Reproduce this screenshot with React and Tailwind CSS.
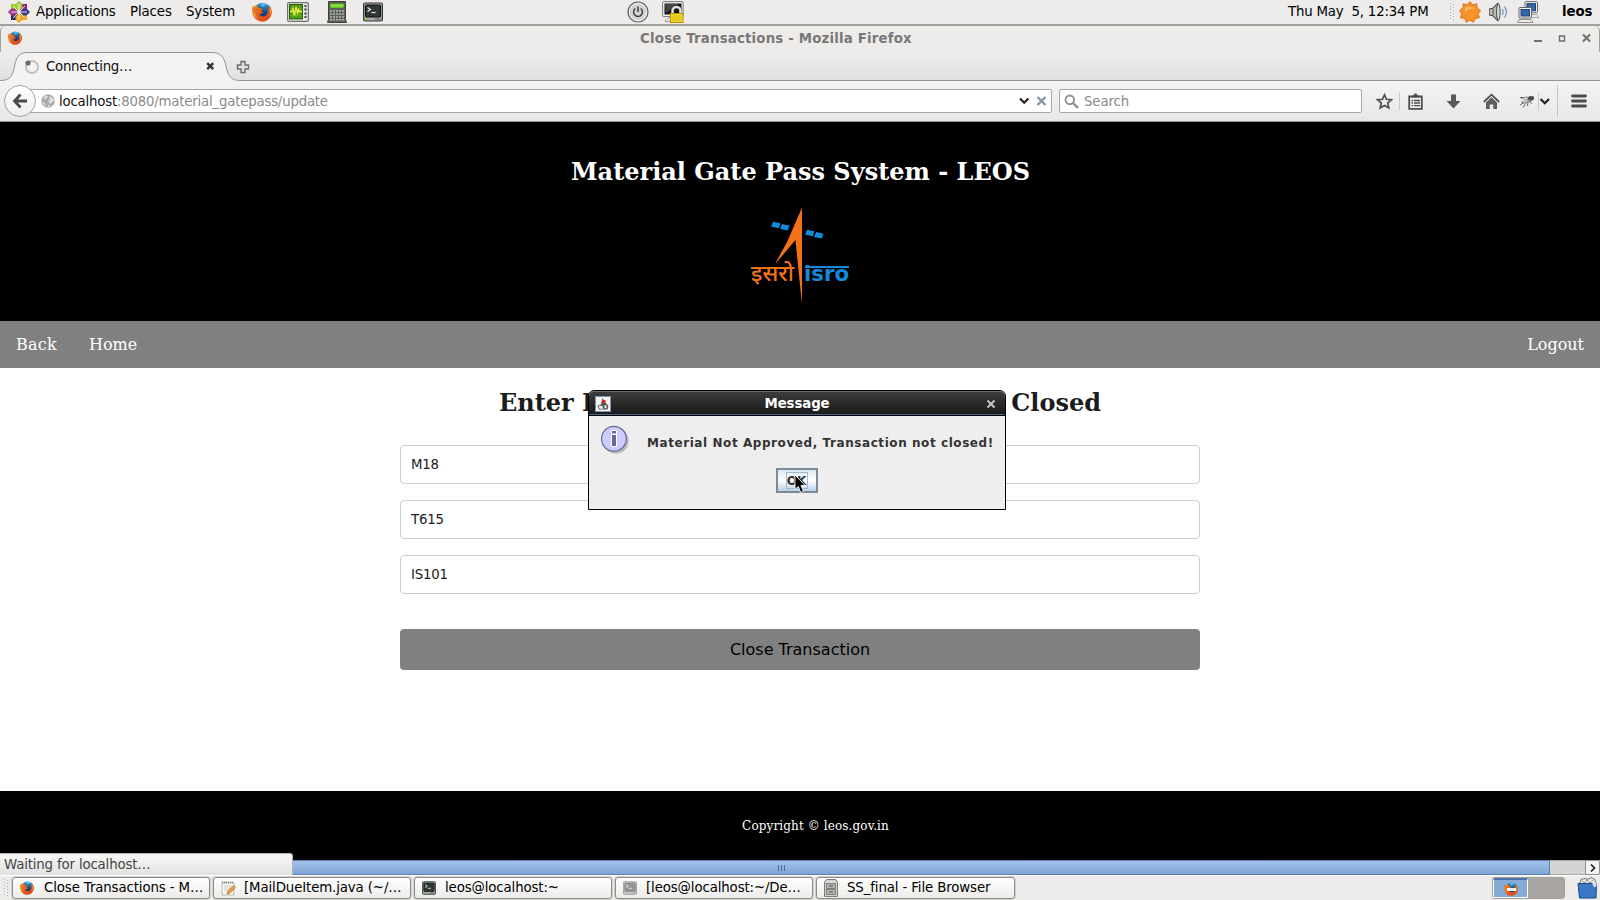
import React from "react";

function Firefox({ size = 20 }) {
  return (
    <svg width={size} height={size} viewBox="0 0 20 20" className="block shrink-0">
      <defs>
        <linearGradient id="fxb" x1="0" y1="0" x2="0" y2="1">
          <stop offset="0" stopColor="#2f9fd0" />
          <stop offset="0.6" stopColor="#16407c" />
          <stop offset="1" stopColor="#102a5c" />
        </linearGradient>
        <linearGradient id="fxo" x1="0" y1="0" x2="1" y2="1">
          <stop offset="0" stopColor="#f08a1c" />
          <stop offset="0.5" stopColor="#e5591a" />
          <stop offset="1" stopColor="#d7401c" />
        </linearGradient>
      </defs>
      <circle cx="10.5" cy="9.5" r="8.8" fill="url(#fxb)" />
      <path d="M9 2c2-1 4-.8 6 .5-1 1-3 .8-4 2.500-1-.5-2-1.500-2-3z" fill="#5cc0e6" />
      <path d="M1 3.200C.2 5.500 0 8 .4 11c.9 5 5 8.700 9.800 8.700 5.400 0 9.600-4.300 9.600-9.700 0-2.500-.8-4.800-2-6.200.5 2 .4 3.600-.1 5-.2-2-1-4-3-5.400 1.300 2.300 1.900 5.300.9 7.600-1 2.500-3.200 3.700-5.400 3.300-1.700-.3-2.700-1.400-3-2.500 1.400.5 2.700-.1 4-1 .2-.9-1-1.200-2-1.100-.3-1 .7-1.800 1.500-2.300-.4-1-1.900-1.200-3-1C6.300 5.600 5.500 4.700 5.400 3 3.800 3.500 2.800 4.200 2.300 5 1.700 4.600 1.200 4 1 3.200z" fill="url(#fxo)" />
      <path d="M17.800 4.500c1.500 3 1.500 7.500-.8 10.500 1-2.500 1.200-5 .7-6.800z" fill="#fbc83a" />
      <path d="M1.200 8c.3 1.500 1 2.500 1.600 3 .3 2.500 2 4.500 4 5.500C3.500 15.900 1 12.500 1.200 8z" fill="#f9a82e" />
    </svg>
  );
}

function Distro() {
  return (
    <svg width="22" height="22" viewBox="0 0 22 22" className="block">
      <path d="M11 0l3.500 3.600H7.500z" fill="#8fb440" />
      <path d="M22 11l-3.600 3.500V7.500z" fill="#262577" />
      <path d="M11 22l-3.500-3.600h7z" fill="#e9a22b" />
      <path d="M0 11l3.600-3.500v7z" fill="#932279" />
      <rect x="3" y="3" width="7" height="7" fill="#9ccd2a" />
      <rect x="12" y="3" width="7" height="7" fill="#932279" />
      <rect x="3" y="12" width="7" height="7" fill="#262577" />
      <rect x="12" y="12" width="7" height="7" fill="#efa724" />
      <path d="M7.500 3.600L11 1l3.500 2.600v3L11 10 7.500 6.600z" fill="#a6cf45" />
      <path d="M18.400 7.500L21 11l-2.600 3.500h-3L12 11l3.400-3.500z" fill="#3c3a8c" />
      <path d="M14.500 18.400L11 21l-3.500-2.600v-3L11 12l3.500 3.400z" fill="#efa724" />
      <path d="M3.600 14.500L1 11l2.600-3.500h3L10 11l-3.400 3.500z" fill="#a1368a" />
      <path d="M11 3v16M3 11h16M5 5l12 12M17 5L5 17" stroke="#f4f2ee" strokeWidth="0.9" />
    </svg>
  );
}

function Monitor() {
  return (
    <svg width="22" height="20" viewBox="0 0 22 20" className="block">
      <rect x="0.600" y="0.600" width="20.800" height="18.800" rx="1.500" fill="#ededeb" stroke="#6c6e6a" strokeWidth="1.200" />
      <rect x="2.500" y="2.500" width="13" height="14.500" fill="#4f9a12" stroke="#2b5b08" />
      <path d="M5.500 3v13M9 3v13M12.500 3v13M3 6.500h12M3 10h12M3 13.500h12" stroke="#6fb52d" strokeWidth="0.600" />
      <path d="M3 9.500h2l1-3 1.500 7L9 5l1.500 6 1-3.500 1 2H15" fill="none" stroke="#eef04a" strokeWidth="1.300" />
      <circle cx="18.500" cy="4" r="1.300" fill="#555" />
      <circle cx="18.500" cy="7.500" r="1.300" fill="#555" />
      <circle cx="18.500" cy="11.500" r="1.300" fill="#555" />
      <circle cx="18.500" cy="15" r="1.300" fill="#555" />
    </svg>
  );
}

function Calculator() {
  return (
    <svg width="20" height="22" viewBox="0 0 20 22" className="block">
      <path d="M1.500.5h17v18l1 3H.5l1-3z" fill="#5d605b" stroke="#3c3f3b" />
      <rect x="3" y="2.500" width="14" height="4.500" fill="#84dc3c" stroke="#3e7d14" strokeWidth="0.700" />
      <path d="M3 10h14M3 13h14M3 16h14M3 18.800h14" stroke="#b4b6b1" strokeWidth="1.500" strokeDasharray="2 1" />
    </svg>
  );
}

function Terminal({ size = 20, dim = false }) {
  return (
    <svg width={size} height={size} viewBox="0 0 20 20" className={dim ? "block opacity-50" : "block"}>
      <rect x="0.600" y="1" width="18.800" height="18" rx="1.500" fill="#a8aaa6" stroke="#353735" strokeWidth="1.200" />
      <rect x="2.500" y="3" width="15" height="12" rx="1" fill="#30393a" stroke="#111" />
      <path d="M4.500 5.500l3 2-3 2" fill="none" stroke="#e6eae6" strokeWidth="1.300" />
      <path d="M8.500 10.500h4" stroke="#e6eae6" strokeWidth="1.200" />
      <path d="M2 17h3" stroke="#73d216" strokeWidth="1.400" />
      <path d="M12 17h5.500" stroke="#5b5d5a" strokeWidth="1" />
    </svg>
  );
}

function Power() {
  return (
    <svg width="22" height="22" viewBox="0 0 22 22" className="block">
      <circle cx="11" cy="11" r="10" fill="#d2d2d0" stroke="#5f615e" strokeWidth="1.200" />
      <circle cx="11" cy="11" r="8.600" fill="none" stroke="#f6f6f5" strokeWidth="0.900" />
      <path d="M8.300 7.500a4.400 4.400 0 1 0 5.400 0" fill="none" stroke="#2e3436" strokeWidth="1.300" />
      <path d="M11 5.500v5.500" stroke="#2e3436" strokeWidth="1.400" />
    </svg>
  );
}

function LockScreen() {
  return (
    <svg width="22" height="22" viewBox="0 0 22 22" className="block">
      <rect x="0.600" y="0.600" width="20.500" height="15" rx="1" fill="#eee" stroke="#777" />
      <rect x="2.500" y="2.500" width="17" height="11" fill="#161616" />
      <path d="M3 3h13L4 12z" fill="#454545" />
      <path d="M3 20.500c0-2.500 3-1.500 4-4h4v4z" fill="#e8e8e6" stroke="#888" strokeWidth="0.700" />
      <path d="M10.500 13V10a4 4 0 0 1 8 0v3" fill="none" stroke="#777" strokeWidth="3.200" />
      <path d="M10.500 13V10a4 4 0 0 1 8 0v3" fill="none" stroke="#e4e4e2" strokeWidth="2" />
      <rect x="8.500" y="12.500" width="12.500" height="9" fill="#f2d82e" stroke="#b39300" />
      <path d="M10 15h9.500M10 17h9.500M10 19h9.500" stroke="#d4b60e" strokeWidth="0.800" />
    </svg>
  );
}

function Sun() {
  return (
    <svg width="22" height="22" viewBox="0 0 22 22" className="block">
      <path d="M11 .6l2.600 3.200 4.200-1 .2 4.100 3.500 2.500-2.200 3.300 1 4.100-4 .7-1.900 3.700-3.400-2L7.200 21.200l-1.500-3.900-4.200-.5 1.200-4L.6 9.400 4 6.900l.2-4.100 4.100 1z" fill="#f7922a" stroke="#dc6a0c" strokeWidth="0.900" />
      <path d="M6 7c3-2.500 8-2 10 1-4-1-7 0-10 3z" fill="#fbb669" />
    </svg>
  );
}

function Speaker() {
  return (
    <svg width="20" height="20" viewBox="0 0 20 20" className="block">
      <path d="M1 6.500h2.500L8.500 1.500v17L3.500 13.500H1C0 12 0 8.500 1 6.500z" fill="#b9bbb7" stroke="#4f524e" strokeWidth="1.100" />
      <path d="M4 7v6" stroke="#4f524e" />
      <ellipse cx="9.300" cy="10" rx="1.800" ry="8.500" fill="#d5dad5" stroke="#4f524e" />
      <path d="M13.200 7c1.200 1.500 1.200 4.500 0 6M15.500 4.500c2.500 3 2.500 8 0 11" fill="none" stroke="#6c92c8" strokeWidth="1.200" />
    </svg>
  );
}

function Network() {
  return (
    <svg width="22" height="22" viewBox="0 0 22 22" className="block">
      <path d="M9 13.500h11l1.500 3H9z" fill="#eee" stroke="#888" strokeWidth="0.700" />
      <rect x="8" y="0.700" width="12.500" height="11" rx="1" fill="#f2f2f0" stroke="#666" />
      <rect x="10" y="2.700" width="8.500" height="7" fill="#3465a4" stroke="#1c4480" />
      <rect x="2" y="6.500" width="12.500" height="10.500" rx="1" fill="#f2f2f0" stroke="#666" />
      <rect x="4" y="8.500" width="8.500" height="6.500" fill="#3465a4" stroke="#1c4480" />
      <path d="M2 18.500h12l2 3H.7z" fill="#eee" stroke="#777" strokeWidth="0.800" />
    </svg>
  );
}

function Grip() {
  return (
    <svg width="6" height="18" viewBox="0 0 6 18" className="block">
      <path d="M1.500 0v18M4.500 1v18" stroke="#b0aeab" strokeWidth="1" strokeDasharray="1 2" />
    </svg>
  );
}

function TopPanel() {
  return (
    <div className="flex h-[26px] shrink-0 items-center border-b-2 border-[#a3a19d] bg-[#edecea] text-[13.33px] whitespace-nowrap text-black">
      <div className="ml-2"><Distro /></div>
      <div className="ml-[6px] w-[94px] tracking-[-0.15px]">Applications</div>
      <div className="w-[56px] tracking-[-0.1px]">Places</div>
      <div className="w-[66px] tracking-[-0.1px]">System</div>
      <Firefox size={20} />
      <div className="ml-[15px]"><Monitor /></div>
      <div className="ml-[18px]"><Calculator /></div>
      <div className="ml-[16px]"><Terminal size={20} /></div>
      <div className="ml-[244px]"><Power /></div>
      <div className="ml-[13px]"><LockScreen /></div>
      <div className="ml-auto w-[161px] tracking-[-0.2px] whitespace-pre">Thu May  5, 12:34 PM</div>
      <Grip />
      <div className="ml-[4px]"><Sun /></div>
      <div className="ml-[8px]"><Speaker /></div>
      <div className="ml-[8px]"><Network /></div>
      <div className="ml-[23px] w-[38px] font-bold tracking-[-0.1px]">leos</div>
    </div>
  );
}

function TitleBar() {
  return (
    <div className="flex h-[26px] shrink-0 items-center rounded-t-[5px] border-x border-[#a3a19d] text-[13.33px]">
      <div className="-mt-[2px] ml-[7px]"><Firefox size={14} /></div>
      <div className="flex-1 pr-[3px] text-center font-bold tracking-[0.18px] text-[#797876]">Close Transactions - Mozilla Firefox</div>
      <svg width="58" height="12" viewBox="0 0 58 12" className="mr-[8px] block" fill="none" stroke="#6f6e6b">
        <path d="M1 8h8" strokeWidth="2" />
        <path d="M26.500 3v5h5V3M25.800 3h6.400" strokeWidth="1.400" />
        <path d="M50 1.500l7 7M57 1.500l-7 7" strokeWidth="2" />
      </svg>
    </div>
  );
}

function TabStrip() {
  return (
    <div className="flex h-[29px] shrink-0 bg-linear-to-b from-[#edecea] to-[#e2e1df]">
      <div className="grid h-[29px] w-[240px] shrink-0">
        <svg width="240" height="29" viewBox="0 0 240 29" className="col-start-1 row-start-1 block">
          <path d="M0 28.500C9 28.500 12 25 14 17C16 6 18 .5 27 .5H212C221 .5 224 5 226 14C228 24 231 28.500 240 28.500V29H0z" fill="#f4f3f2" />
          <path d="M0 28.500C9 28.500 12 25 14 17C16 6 18 .5 27 .5H212C221 .5 224 5 226 14C228 24 231 28.500 240 28.500" fill="none" stroke="#979592" />
        </svg>
        <div className="z-10 col-start-1 row-start-1 flex items-center pl-[24px] text-[13.33px] text-[#111]">
          <svg width="16" height="16" viewBox="0 0 16 16" className="block">
            <circle cx="8" cy="8" r="6" fill="none" stroke="#c2c1bf" strokeWidth="2" />
            <circle cx="4" cy="4" r="2.600" fill="#6b6a69" />
          </svg>
          <div className="ml-[6px] w-[160px] tracking-[-0.27px]">Connecting…</div>
          <svg width="9" height="9" viewBox="0 0 9 9" className="block">
            <path d="M1.200 1.200l6 6M7.200 1.200l-6 6" stroke="#333" strokeWidth="2.400" />
          </svg>
        </div>
      </div>
      <div className="flex flex-1 items-center border-b border-[#979592]">
        <svg width="14" height="14" viewBox="0 0 14 14" className="mt-[1px] -ml-[4px] block">
          <path d="M5 1.500h4V5h3.500v4H9v3.500H5V9H1.500V5H5z" fill="#e2e1df" stroke="#6e6d6b" strokeWidth="1.400" />
        </svg>
      </div>
    </div>
  );
}

function Toolbar() {
  return (
    <div className="flex h-[41px] shrink-0 items-center border-b border-[#9c9a97] bg-linear-to-b from-[#f4f3f2] to-[#e9e8e6] text-[13.33px]">
      <div className="z-10 ml-[4px] flex h-8 w-8 items-center justify-center rounded-full border border-[#9aa5b1] bg-linear-to-b from-white to-[#efeeed]">
        <svg width="16" height="16" viewBox="0 0 16 16" className="block" fill="none" stroke="#4b4b4b" strokeWidth="2.800">
          <path d="M8.500 1.500L2.500 8l6 6.500M3 8h12" />
        </svg>
      </div>
      <div className="-ml-[8px] flex h-6 w-[1024px] shrink-0 items-center rounded-r-[2px] border border-[#a9a7a4] bg-white pl-[12px]">
        <svg width="14" height="14" viewBox="0 0 14 14" className="block">
          <circle cx="7" cy="7" r="6.700" fill="#a9a9a9" />
          <path d="M2 3.500l3-2 2 .5-1 2-2 1.500zM1 8l3 1 1 3-2-1zM8 2l4 2 1 3-2 1-1 2-2-1-.5-3 1.500-1zM7 11l2 0 0 2-1.500.3z" fill="#dedede" />
        </svg>
        <div className="mt-[1px] ml-[4px] tracking-[-0.21px] text-[#8a8a8a]"><span className="text-[#111]">localhost</span>:8080/material_gatepass/update</div>
        <svg width="30" height="12" viewBox="0 0 30 12" className="mr-[3px] ml-auto block" fill="none">
          <path d="M2 3.500l4.200 4.200 4.200-4.200" stroke="#222" strokeWidth="2.200" />
          <path d="M19.500 2l8 8M27.500 2l-8 8" stroke="#8194a8" strokeWidth="2.400" />
        </svg>
      </div>
      <div className="ml-[7px] flex h-6 w-[303px] shrink-0 items-center rounded-[2px] border border-[#a9a7a4] bg-white">
        <svg width="15" height="15" viewBox="0 0 15 15" className="ml-[4px] block" fill="none" stroke="#8f8f8f">
          <circle cx="5.800" cy="5.800" r="4.300" strokeWidth="1.800" />
          <path d="M9 9l5 5" strokeWidth="2.400" />
        </svg>
        <div className="mt-[1px] ml-[5px] tracking-[-0.1px] text-[#8a8a8a]">Search</div>
      </div>
      <svg width="17" height="17" viewBox="0 0 17 17" className="ml-[14px] block">
        <path d="M8.500 1.800l2 4.500 4.900.5-3.700 3.300 1.100 4.800-4.300-2.500-4.300 2.500 1.100-4.800L1.600 6.800l4.900-.5z" fill="none" stroke="#4d4d4d" strokeWidth="1.700" />
      </svg>
      <div className="ml-[6px] h-[18px] w-px bg-[#c9c8c6]" />
      <svg width="15" height="17" viewBox="0 0 15 17" className="ml-[8px] block">
        <path d="M1.200 3.500h12.600v12.300H1.200z" fill="#f2f1f0" stroke="#4d4d4d" strokeWidth="1.800" />
        <path d="M4 4.500V2.500h1.500L6.500.5h2l1 2H11v2z" fill="#4d4d4d" />
        <path d="M3.500 7.500H5M6 7.500h6M3.500 10H5M6 10h6M3.500 12.700H5M6 12.700h6" stroke="#4d4d4d" strokeWidth="1.300" />
      </svg>
      <svg width="15" height="17" viewBox="0 0 15 17" className="ml-[23px] block">
        <path d="M5 1.500h5v6.500h4.500l-7 7.500-7-7.500H5z" fill="#5a5a5a" />
      </svg>
      <svg width="17" height="17" viewBox="0 0 17 17" className="ml-[22px] block">
        <path d="M.8 9l7.700-7.300L16.200 9" fill="none" stroke="#4d4d4d" strokeWidth="1.800" />
        <path d="M3 9.500l5.500-5.200 5.500 5.200V16h-3.700v-4.500H6.700V16H3z" fill="#5d5d5d" />
      </svg>
      <svg width="16" height="15" viewBox="0 0 16 15" className="ml-[19px] block">
        <path d="M1 4.500l7-2.200 2 2 4.500-2.500.5 3-3 3-4 1.500-5 .5-1-2.500 4-1z" fill="#9e9e9c" />
        <ellipse cx="12" cy="4.200" rx="3" ry="2.200" fill="#4c4c4a" />
        <path d="M10 7.500c2 .5 2 1.500 3 2.500M6.500 9.500L4 13.500M9 8.500l-.5 3.500M1 11l4-2.500M1 3.500h4" stroke="#555" strokeWidth="0.900" fill="none" />
        <path d="M3 5.500l5-1M4 8l4-1.500" stroke="#f0f0f0" strokeWidth="0.900" />
      </svg>
      <div className="ml-[3px] h-[18px] w-px bg-[#c9c8c6]" />
      <svg width="12" height="9" viewBox="0 0 12 9" className="block" fill="none">
        <path d="M1.500 2l4.300 4.300L10 2" stroke="#222" strokeWidth="2.200" />
      </svg>
      <div className="ml-[6px] h-[32px] w-px bg-[#c2c5ca]" />
      <svg width="16" height="16" viewBox="0 0 16 16" className="ml-[13px] block">
        <path d="M1.500 3h13M1.500 8h13M1.500 13h13" stroke="#4d4d4d" strokeWidth="2.800" strokeLinecap="round" />
      </svg>
    </div>
  );
}

function IsroLogo() {
  return (
    <svg width="104" height="100" viewBox="748 206 104 100" className="block overflow-visible">
      <path d="M802 207.500V304L800.500 290L795.500 240L775.200 264C779 256 784 248 788 240z" fill="#f47216" />
      <g fill="#118bd9">
        <path d="M773 221.800l7.500 1.500-1.800 5-7.500-1.500zM782 224l7.600 1.700-1.900 4.900-7.500-1.500zM807 229.800l7.500 1.500-1.800 5-7.500-1.500zM816 232l7.500 1.700-1.900 4.900-7.500-1.500z" />
        <rect x="805" y="266" width="44" height="2" />
      </g>
      <text x="751" y="280.500" textLength="43" lengthAdjust="spacingAndGlyphs" fontFamily="'Noto Sans', sans-serif" fontSize="22.500" fontWeight="500" fill="#f47216">इसरो</text>
      <text x="804" y="281" textLength="45" lengthAdjust="spacingAndGlyphs" fontFamily="'DejaVu Sans', sans-serif" fontSize="21" fontWeight="700" fill="#118bd9">isro</text>
    </svg>
  );
}

function Field({ value }) {
  return (
    <div className="flex h-[39px] items-center rounded-[4px] border border-[#cccccc] bg-white pl-[10px] text-[13.33px] tracking-[-0.2px] text-[#1c1c1c]">{value}</div>
  );
}

function Dialog() {
  return (
    <div className="absolute top-[390px] left-[588px] z-20 flex h-[120px] w-[418px] flex-col rounded-t-[6px] border border-black bg-[#eeeeee] [font-family:'DejaVu_Sans',sans-serif]">
      <div className="flex h-[25px] shrink-0 items-center rounded-t-[5px] border-b border-black bg-linear-to-b from-[#3c3c3c] via-[#2b2b2b] to-[#1a1a1a] shadow-[inset_0_1px_0_#6a6a6a,inset_0_-1px_0_#456593]">
        <svg width="16" height="16" viewBox="0 0 16 16" className="mt-[1px] ml-[6px] block">
          <rect x="0.500" y="0.500" width="15" height="15" fill="#f2f4f5" stroke="#7d98ae" />
          <path d="M7.500 2l2 3.500 4 4.500-1 3.500H4L2.500 9.500l3.500-1z" fill="#555" />
          <path d="M3.500 9.500l4 .5.500 3-3.500-.5zM9.500 9l2 .500v2.500l-2 .5z" fill="#f0f0ee" />
          <circle cx="9" cy="5.500" r="1.800" fill="#e02a20" />
        </svg>
        <div className="flex-1 pt-[2px] pr-[3px] text-center text-[13.33px] font-bold tracking-[-0.1px] text-white">Message</div>
        <svg width="10" height="10" viewBox="0 0 10 10" className="mt-[1px] mr-[9px] block">
          <path d="M1.500 1.500l7 7M8.500 1.500l-7 7" stroke="#c4c4c4" strokeWidth="2" />
        </svg>
      </div>
      <div className="flex pt-[9px] pl-[12px]">
        <svg width="32" height="32" viewBox="0 0 32 32" className="block">
          <circle cx="15.500" cy="16.500" r="12.500" fill="#000" opacity="0.080" />
          <circle cx="14.500" cy="15.500" r="13" fill="#000" opacity="0.160" />
          <circle cx="12.900" cy="13.800" r="12.400" fill="#ccccff" stroke="#666699" strokeWidth="1.200" />
          <path d="M10.500 5.500h5V9h-5zM10.500 9.500h5V21.500h-5z" fill="#666699" stroke="#fff" />
        </svg>
        <div className="mt-[11px] -mb-[2px] ml-[14px] text-[12px] leading-[15px] font-bold tracking-[0.57px] whitespace-nowrap text-[#333333]">Material Not Approved, Transaction not closed!</div>
      </div>
      <div className="mt-[11px] flex justify-center pr-[1px]">
        <div className="flex h-[25px] w-[42px] items-center justify-center border-2 border-[#7a8a99] bg-linear-to-b from-[#dde8f3] via-white to-[#b8cfe5]">
          <div className="relative flex h-[17px] w-[22px] items-center justify-center border border-[#a3b8cc] text-[12px] leading-none font-bold text-[#333333]">
            OK
            <svg width="12" height="20" viewBox="0 0 12 20" className="absolute top-[1px] left-[7px] block">
              <path d="M1 1v14.500l3.300-3 2.400 6 2.800-1.200-2.500-5.700h4.300z" fill="#000" stroke="#fff" strokeWidth="0.900" />
            </svg>
          </div>
        </div>
      </div>
    </div>
  );
}

function Task({ icon, children }) {
  return (
    <div className="flex h-[22px] w-[198px] shrink-0 items-center rounded-[3px] border border-[#8f8d8a] bg-linear-to-b from-white to-[#ecebe9] pl-[7px] tracking-[-0.12px] whitespace-nowrap shadow-[0_0_0_0.500px_#b5b3b0] last-of-type:w-[199px]">
      <div className="w-[23px]">{icon}</div>
      {children}
    </div>
  );
}

function Taskbar() {
  return (
    <div className="flex h-[25px] shrink-0 items-center border-t border-white bg-[#edecea] text-[13.33px] text-black">
      <div className="mr-[3px] ml-[3px] w-[6px]"><Grip /></div>
      <div className="flex gap-[3px]">
        <Task icon={<Firefox size={14} />}><span className="ml-px">Close Transactions - M…</span></Task>
        <Task icon={
          <svg width="15" height="15" viewBox="0 0 15 15" className="block">
            <path d="M1 1.500h12v12.500H1z" fill="#f4f4f2" stroke="#b7b9b4" />
            <path d="M1 1.500h12" stroke="#888" strokeDasharray="1 1" strokeWidth="2" />
            <path d="M3 5h8M3 7h8M3 9h5" stroke="#c8c8c6" strokeWidth="0.800" />
            <path d="M6 13l1-3 5.500-5.500 2 2L9 12z" fill="#f0a04b" stroke="#b46a1c" strokeWidth="0.700" />
          </svg>
        }>[MailDueItem.java (~/…</Task>
        <Task icon={<Terminal size={14} />}>leos@localhost:~</Task>
        <Task icon={<Terminal size={14} dim />}>[leos@localhost:~/De…</Task>
        <Task icon={
          <svg width="14" height="18" viewBox="0 0 14 18" className="block">
            <path d="M.600 17.400V3L2.500.6h9L13.400 3v14.400z" fill="#dcdedb" stroke="#6e716c" />
            <rect x="2.500" y="4.500" width="9" height="5" fill="#b2b5b0" stroke="#6e716c" strokeWidth="0.800" />
            <rect x="2.500" y="10.500" width="9" height="5" fill="#b2b5b0" stroke="#6e716c" strokeWidth="0.800" />
            <path d="M5 7h4M5 13h4" stroke="#555" />
          </svg>
        }>SS_final - File Browser</Task>
      </div>
      <div className="ml-auto flex h-[22px] w-[73px] overflow-hidden rounded-[3px] border border-[#a5a29f] bg-[#a8a5a2]">
        <div className="flex h-[20px] w-[35px] items-center justify-center border border-t-2 border-white border-t-[#4a74ae] bg-[#86abd9]">
          <div className="relative">
            <Firefox size={14} />
            <div className="absolute top-[6px] left-[3px] h-[3px] w-[9px] bg-white" />
          </div>
        </div>
      </div>
      <svg width="21" height="22" viewBox="0 0 21 22" className="mr-[2px] ml-[12px] block">
        <path d="M2 8L4 2.500l4-1 3 1 3-2 4 2 1 6z" fill="#e8eaec" stroke="#666" strokeWidth="0.900" />
        <path d="M5 4l3 2 2-3 3 3 3-3" fill="none" stroke="#888" strokeWidth="0.900" />
        <path d="M1 6.500h18.500l-.5 14.500H2.500z" fill="#3b78c4" stroke="#1d4680" />
        <path d="M15 6.500l4.500-1.500v4l-2 1.500z" fill="#d8e2ee" />
      </svg>
    </div>
  );
}

export default function App() {
  return (
    <div className="relative flex h-[900px] w-[1600px] flex-col overflow-hidden bg-[#edecea] [font-family:'DejaVu_Sans',sans-serif]">
      <TopPanel />
      <TitleBar />
      <TabStrip />
      <Toolbar />

      <header className="flex h-[199px] shrink-0 flex-col items-center bg-black [font-family:'DejaVu_Serif',serif]">
        <h1 className="mt-[34px] pl-px text-[24px] leading-[32px] font-bold whitespace-nowrap text-white">Material Gate Pass System - LEOS</h1>
        <div className="mt-[18px]"><IsroLogo /></div>
      </header>
      <nav className="flex h-[47px] shrink-0 items-center bg-[#808080] px-4 text-[16px] text-white [font-family:'DejaVu_Serif',serif]">
        <a className="mr-8 tracking-[0.25px]">Back</a>
        <a>Home</a>
        <a className="ml-auto">Logout</a>
      </nav>
      <main className="flex h-[423px] shrink-0 flex-col items-center bg-white">
        <h2 className="mt-[19px] flex w-[602px] justify-between text-[24px] leading-[32px] font-bold whitespace-nowrap text-[#1c1c1c] [font-family:'DejaVu_Serif',serif]">
          <span>Enter Details</span>
          <span>Closed</span>
        </h2>
        <div className="mt-[26px] flex w-[800px] flex-col gap-4">
          <Field value="M18" />
          <Field value="T615" />
          <Field value="IS101" />
        </div>
        <button className="mt-[35px] h-[41px] w-[800px] rounded-[4px] bg-[#808080] text-[16px] text-black">Close Transaction</button>
      </main>
      <footer className="flex h-[69px] shrink-0 items-center justify-center bg-black pl-[31px] text-[12px] tracking-[0.12px] text-white [font-family:'DejaVu_Serif',serif]">Copyright © leos.gov.in</footer>

      <div className="relative flex h-[15px] shrink-0 bg-[#d5d4d2]">
        <div className="flex w-[1550px] items-center border border-[#5b7fb0] bg-linear-to-b from-[#a3c2e8] to-[#7fa5d6]">
          <svg width="8" height="6" viewBox="0 0 8 6" className="ml-[776px] block">
            <path d="M1.500 0v6M4.500 0v6M7.500 0v6" stroke="#4a6c9c" />
          </svg>
        </div>
        <div className="flex-1 border-y border-[#a9a7a4]" />
        <div className="flex w-[15px] items-center justify-center rounded-r-[2px] border border-[#8f8d8a] bg-[#f4f3f2]">
          <svg width="6" height="8" viewBox="0 0 6 8" className="block">
            <path d="M1 .5L4.500 4 1 7.500" fill="none" stroke="#222" strokeWidth="1.700" />
          </svg>
        </div>
        <div className="absolute bottom-0 left-0 flex h-[22px] w-[293px] items-center rounded-tr-[3px] border-t border-r border-[#b5b3b0] bg-linear-to-b from-[#f8f8f7] to-[#e2e1df] pl-[4px] text-[13.33px] tracking-[-0.16px] text-[#444]">Waiting for localhost…</div>
      </div>
      <Taskbar />
      <Dialog />
    </div>
  );
}
